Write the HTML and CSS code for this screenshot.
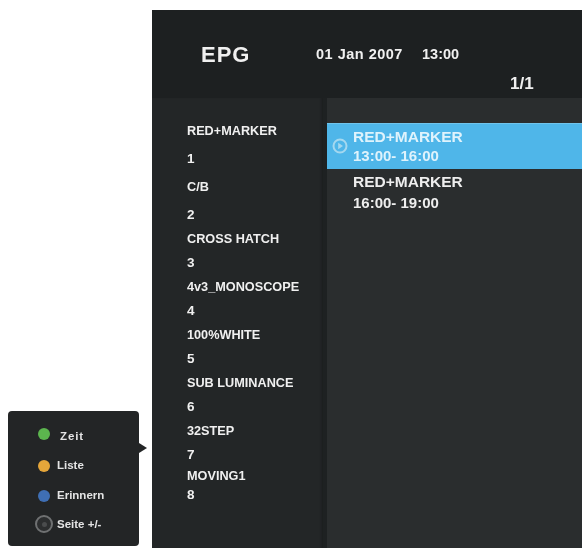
FILE: index.html
```html
<!DOCTYPE html>
<html lang="de">
<head>
<meta charset="utf-8">
<title>EPG</title>
<link rel="stylesheet" href="styles.css">
</head>
<body>
<div class="page">
  <aside class="legend-col">
    <div class="legend">
      <div class="legend-row"><span class="icon-cell"><span class="dot green"></span></span><span class="legend-label first">Zeit</span></div>
      <div class="legend-row"><span class="icon-cell"><span class="dot orange"></span></span><span class="legend-label">Liste</span></div>
      <div class="legend-row"><span class="icon-cell"><span class="dot blue"></span></span><span class="legend-label">Erinnern</span></div>
      <div class="legend-row"><span class="icon-cell"><span class="wheel"><span class="wheel-core"></span></span></span><span class="legend-label">Seite +/-</span></div>
    </div>
  </aside>
  <main class="panel">
    <header class="head">
      <div class="title">EPG</div>
      <div class="date">01 Jan 2007</div>
      <div class="time">13:00</div>
      <div class="pager">1/1</div>
    </header>
    <div class="body">
      <ul class="channels">
        <li class="name">RED+MARKER</li><li class="num">1</li>
        <li class="name">C/B</li><li class="num">2</li>
        <li class="name tight">CROSS HATCH</li><li class="num">3</li>
        <li class="name tight">4v3_MONOSCOPE</li><li class="num">4</li>
        <li class="name tight">100%WHITE</li><li class="num">5</li>
        <li class="name tight">SUB LUMINANCE</li><li class="num">6</li>
        <li class="name tight">32STEP</li><li class="num before-last">7</li>
        <li class="name last">MOVING1</li><li class="num">8</li>
      </ul>
      <div class="events">
        <div class="event active">
          <svg class="play" viewBox="0 0 16 16" width="16" height="16" aria-hidden="true"><circle cx="8" cy="8" r="6.5" fill="none" stroke="#a5d8ef" stroke-width="2"/><path d="M6.2 4.8 11 8l-4.8 3.2z" fill="#a5d8ef"/></svg>
          <div class="event-title">RED+MARKER</div>
          <div class="event-time">13:00- 16:00</div>
        </div>
        <div class="event">
          <div class="event-title">RED+MARKER</div>
          <div class="event-time gap">16:00- 19:00</div>
        </div>
      </div>
    </div>
  </main>
</div>
</body>
</html>
```

FILE: styles.css
```css
* { box-sizing: border-box; }
html, body { margin: 0; padding: 0; background: #fff; }
body { font-family: "Liberation Sans", Arial, sans-serif; font-weight: 700; color: #f0f0f0; }
.page { display: flex; width: 587px; height: 548px; overflow: hidden; filter: blur(0.35px); }

.legend-col { width: 152px; flex: none; display: flex; align-items: flex-end; padding: 0 0 2px 8px; }
.legend { position: relative; width: 131px; height: 135px; background: #232526; border-radius: 4px; padding: 10px 0 0 0; display: flex; flex-direction: column; }
.legend::after { content: ""; position: absolute; left: 131px; top: 32px; border-left: 8px solid #232526; border-top: 5px solid transparent; border-bottom: 5px solid transparent; }
.legend-row { height: 29.5px; display: flex; align-items: center; font-size: 11.5px; color: #e4e4e4; }
.icon-cell { width: 49px; padding-left: 30px; display: flex; flex: none; }
.dot { width: 12px; height: 12px; border-radius: 50%; display: block; filter: blur(0.7px); }
.green { background: #5cb54e; margin-top: -3px; }
.orange { background: #e5a63a; margin-top: 2px; }
.blue { background: #3f6fb4; margin-top: 2px; }
.wheel { width: 18px; height: 18px; margin-left: -3px; border-radius: 50%; border: 2px solid #6f7172; display: flex; align-items: center; justify-content: center; background: #2c2e2f; }
.wheel-core { width: 5px; height: 5px; border-radius: 50%; background: #4a4c4d; }
.legend-label.first { margin-left: 3px; letter-spacing: 0.9px; }

.panel { width: 430px; height: 538px; margin-top: 10px; background: #1e2122; display: flex; flex-direction: column; flex: none; }
.head { height: 88px; flex: none; position: relative; background: #1d2021; }
.title { position: absolute; left: 49px; top: 32px; font-size: 22px; line-height: 26px; letter-spacing: 1px; }
.date { position: absolute; left: 164px; top: 35px; font-size: 14.5px; line-height: 18px; letter-spacing: 0.5px; }
.time { position: absolute; left: 270px; top: 35px; font-size: 14.5px; line-height: 18px; }
.pager { position: absolute; left: 358px; top: 64px; font-size: 17px; line-height: 20px; }

.body { flex: 1; display: flex; min-height: 0; }
.channels { list-style: none; margin: 0; padding: 24px 0 0 35px; width: 171px; flex: none; background: #232627; box-shadow: inset -3px 0 3px -2px #1a1c1d; }
.name, .num { white-space: nowrap; line-height: 18px; }
.name { height: 28px; font-size: 12.7px; }
.name.tight { height: 24px; }
.name.last { height: 19px; }
.num { height: 28px; font-size: 13.5px; }
.channels .num:nth-child(n+4) { height: 24px; }
.channels .num.before-last { height: 21px; }

.events { flex: 1; margin-left: 4px; background: #2a2d2e; padding-top: 25px; min-width: 0; }
.event { height: 46px; padding: 4px 0 0 26px; font-size: 15.5px; position: relative; line-height: 18px; color: #eee; }
.event.active { background: #4fb6e9; color: #dff3fc; border-top: 1px solid #6fc4ec; }
.event-time { font-size: 15px; margin-top: 1px; }
.event-time.gap { margin-top: 3px; }
.play { position: absolute; left: 5px; top: 14px; }
```
